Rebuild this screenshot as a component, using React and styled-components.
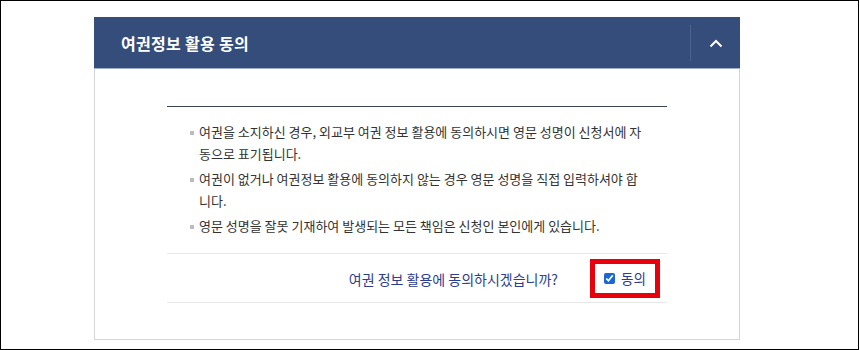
import styled, { createGlobalStyle } from "styled-components"

const GlobalStyle = createGlobalStyle`
body {
  margin: 0;
  background: #fff;
  font-family: "Noto Sans CJK KR", "Noto Sans", sans-serif;
}
`

export const Frame = styled.div`
width: 859px;
height: 350px;
box-sizing: border-box;
border: 1px solid #000;
padding: 16px 0 0 93px;
background: #fff;
`

export const Panel = styled.section`
width: 646px;
display: flex;
flex-direction: column;
`

export const Header = styled.div`
height: 52px;
box-sizing: border-box;
background: #344d7a;
border-bottom: 1px solid #9fb0cf;
display: flex;
align-items: center;
`

export const Title = styled.h2`
flex: 1;
margin: 0;
padding-left: 27px;
color: #fff;
font-size: 16px;
font-weight: 700;
letter-spacing: 0.3px;
`

export const ToggleButton = styled.button`
width: 50px;
height: 36px;
margin-top: 1px;
padding: 0;
border: none;
border-left: 1px solid #4a628e;
background: transparent;
display: flex;
align-items: center;
justify-content: center;
cursor: pointer;
`

export const Body = styled.div`
height: 271px;
box-sizing: border-box;
border: 1px solid #d5d5d5;
border-top: none;
padding: 37px 72px 0;
`

export const Divider = styled.div`
height: 1px;
background: #3b4452;
`

export const NoticeList = styled.ul`
list-style: none;
margin: 0;
padding: 14px 18px 16px 23px;
`

export const NoticeItem = styled.li`
display: flex;
color: #333;
font-size: 13px;
line-height: 22px;
margin-bottom: 3px;
&:last-child {
  margin-bottom: 0;
}
`

export const Bullet = styled.span`
flex: 0 0 4px;
height: 4px;
margin: 10px 5px 0 0;
background: #bcbcbc;
`

export const AgreeRow = styled.div`
height: 50px;
box-sizing: border-box;
border-top: 1px solid #e8e8e8;
border-bottom: 1px solid #e8e8e8;
display: flex;
align-items: center;
justify-content: flex-end;
padding-right: 7px;
`

export const Question = styled.span`
color: #2c3d8f;
font-size: 14px;
margin: 2px 32px 0 0;
`

export const Highlight = styled.label`
width: 70px;
height: 39px;
box-sizing: border-box;
border: 5px solid #e8000d;
display: flex;
align-items: center;
justify-content: center;
gap: 6px;
color: #2c3d8f;
font-size: 13.5px;
cursor: pointer;
`

export const Check = styled.input`
width: 11px;
height: 11px;
margin: 1px 0 0 0;
accent-color: #1a66d2;
`

const notices = [
    "여권을 소지하신 경우, 외교부 여권 정보 활용에 동의하시면 영문 성명이 신청서에 자동으로 표기됩니다.",
    "여권이 없거나 여권정보 활용에 동의하지 않는 경우 영문 성명을 직접 입력하셔야 합니다.",
    "영문 성명을 잘못 기재하여 발생되는 모든 책임은 신청인 본인에게 있습니다.",
]

const App = () => {
    return (
        <>
            <GlobalStyle />
            <Frame>
                <Panel>
                    <Header>
                        <Title>여권정보 활용 동의</Title>
                        <ToggleButton aria-label="접기">
                            <svg width="14" height="9" viewBox="0 0 14 9">
                                <polyline points="1.5,7.5 7,2 12.5,7.5" fill="none" stroke="#fff" strokeWidth="2" />
                            </svg>
                        </ToggleButton>
                    </Header>
                    <Body>
                        <Divider />
                        <NoticeList>
                            {notices.map((text) => (
                                <NoticeItem key={text}>
                                    <Bullet />
                                    <span>{text}</span>
                                </NoticeItem>
                            ))}
                        </NoticeList>
                        <AgreeRow>
                            <Question>여권 정보 활용에 동의하시겠습니까?</Question>
                            <Highlight>
                                <Check type="checkbox" defaultChecked />
                                동의
                            </Highlight>
                        </AgreeRow>
                    </Body>
                </Panel>
            </Frame>
        </>
    )
}

export default App
